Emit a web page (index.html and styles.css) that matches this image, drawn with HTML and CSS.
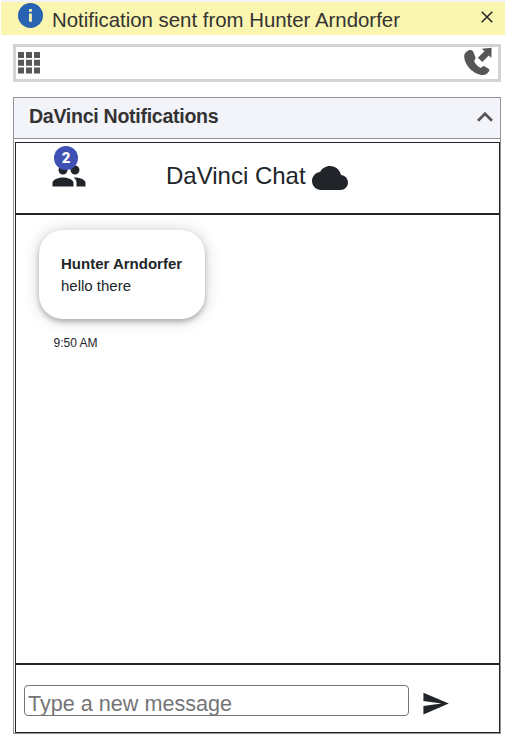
FILE: index.html
```html
<!DOCTYPE html>
<html lang="en">
<head>
<meta charset="utf-8">
<title>DaVinci Chat</title>
<link rel="stylesheet" href="styles.css">
</head>
<body>
<div class="banner">
  <svg class="info" viewBox="0 0 24 24"><circle cx="12" cy="12" r="12" fill="#2763b1"/><path fill="#faf6b0" d="M10.6 5.8h2.7v2.5h-2.7zM10.6 10h2.7v8h-2.700z"/></svg>
  <span class="banner-text">Notification sent from Hunter Arndorfer</span>
  <svg class="close" viewBox="0 0 12 12"><path d="M.7.7l10.6 10.6M11.3.7L.7 11.3" fill="none" stroke="#222" stroke-width="1.5"/></svg>
</div>
<div class="toolbar">
  <svg class="grid-icon" viewBox="0 0 22 22"><path fill="#555658" d="M0 0h6v6H0zM8 0h6v6H8zM16 0h6v6h-6zM0 7.8h6v6H0zM8 7.8h6v6H8zM16 7.8h6v6h-6zM0 15.5h6v6H0zM8 15.5h6v6H8zM16 15.5h6v6h-6z"/></svg>
  <svg class="phone" viewBox="0 0 28 28"><path fill="#555658" d="M4.500 3.400C2 4.500.2 6.400.2 9c0 9 9.500 19 19 19 2.500 0 4.800-1.700 6-4 .4-.9.200-1.600-.6-2.200l-3.800-2.400c-.8-.5-1.500-.4-2.200.2l-1.900 1.500c-2.900-1.600-5.200-4.100-6.700-7.200l1.100-1.600c.5-.7.600-1.400.2-2.200L9.200 4.600c-.7-1.600-2.700-2.100-4.700-1.200z"/><path fill="#555658" d="M17.800 1.700L27.600.7l-.2 10.200-2.700-2.500-6.300 6.500-4.500-4.200 6.600-6.400z"/></svg>
</div>
<section class="panel">
  <header class="panel-header">
    <h2>DaVinci Notifications</h2>
    <svg class="chevron" viewBox="0 0 16 10"><path d="M1 8.700l7-7 7 7" fill="none" stroke="#555658" stroke-width="2.700"/></svg>
  </header>
  <div class="chat">
    <div class="chat-header">
      <div class="people">
        <svg viewBox="0 0 24 24"><path fill="#212529" d="M16 11c1.660 0 2.990-1.340 2.990-3S17.660 5 16 5s-3 1.340-3 3 1.340 3 3 3zm-8 0c1.660 0 2.990-1.340 2.990-3S9.660 5 8 5 5 6.340 5 8s1.340 3 3 3zm0 2c-2.330 0-7 1.170-7 3.500V19h14v-2.500c0-2.330-4.670-3.500-7-3.500zm8 0c-.29 0-.62.020-.97.050 1.160.84 1.970 1.970 1.970 3.450V19h6v-2.500c0-2.330-4.670-3.500-7-3.500z"/></svg>
        <span class="badge">2</span>
      </div>
      <span class="chat-title">DaVinci Chat</span>
      <svg class="cloud" viewBox="0 0 24 24"><path fill="#212529" d="M19.350 10.040C18.670 6.590 15.640 4 12 4 9.110 4 6.600 5.640 5.350 8.040 2.340 8.360 0 10.910 0 14c0 3.310 2.690 6 6 6h13c2.760 0 5-2.240 5-5 0-2.640-2.050-4.780-4.650-4.960z"/></svg>
    </div>
    <div class="messages">
      <div class="bubble">
        <strong>Hunter Arndorfer</strong>
        <span>hello there</span>
      </div>
      <div class="time">9:50 AM</div>
    </div>
    <div class="composer">
      <input type="text" placeholder="Type a new message">
      <svg class="send" viewBox="0 0 24 24"><path fill="#212529" d="M2.010 21L23 12 2.010 3 2 10l15 2-15 2z"/></svg>
    </div>
  </div>
</section>
</body>
</html>
```
FILE: styles.css
```css
* { box-sizing: border-box; }
body {
  margin: 0;
  height: 739px;
  overflow: hidden;
  background: #fff;
  color: #212529;
  font-family: "Liberation Sans", Arial, sans-serif;
}
svg { display: block; flex: none; }
.banner {
  display: flex;
  align-items: flex-start;
  height: 35px;
  padding: 2px 12px 0 17px;
  border-left: 1px solid #fff;
  background: linear-gradient(#f3f4fa 2px, #faf6b0 2px);
}
.info { width: 25px; height: 25px; margin-top: 1px; }
.banner-text { margin: 6px auto 0 9px; font-size: 20.4px; line-height: 24px; white-space: nowrap; color: #333; }
.close { width: 12px; height: 12px; margin-top: 9px; }
.toolbar {
  display: flex;
  justify-content: space-between;
  width: 488px;
  height: 38px;
  margin: 9px 0 0 13px;
  padding: 0 6px 0 2px;
  border: 3px solid #d3d3d3;
}
.grid-icon { width: 22px; height: 22px; margin-top: 5px; }
.phone { width: 28px; height: 28px; }
.panel {
  width: 488px;
  height: 637px;
  margin: 15px 0 0 13px;
  border: 1px solid #929297;
}
.panel-header {
  display: flex;
  justify-content: space-between;
  height: 41px;
  padding: 0 7px 0 15px;
  border-bottom: 1px solid #929297;
  background: #f3f4fa;
}
h2 { margin: 7px 0 0; font-size: 19.6px; letter-spacing: -.3px; line-height: 22px; color: #333; }
.chevron { width: 16px; height: 10px; margin-top: 14px; }
.chat {
  display: flex;
  flex-direction: column;
  height: 591px;
  margin: 3px 0 0 1px;
  border: 1px solid #212529;
}
.chat-header {
  display: flex;
  height: 72px;
  border-bottom: 2px solid #212529;
}
.people { position: relative; width: 36px; margin: 15px 0 0 34.5px; }
.people svg { width: 36px; height: 36px; }
.badge {
  position: absolute;
  left: 3.5px;
  top: -12px;
  width: 24px;
  height: 24px;
  border-radius: 50%;
  background: #3f51b5;
  color: #fff;
  font: 900 15px/25px Roboto, sans-serif;
  text-align: center;
}
.chat-title { margin: 19px 0 0 79.5px; font-size: 24px; line-height: 28px; white-space: nowrap; }
.cloud { width: 36px; height: 36px; margin: 17px 0 0 6.5px; }
.messages { flex: 1; padding: 15px 0 0 23px; }
.bubble {
  display: flex;
  flex-direction: column;
  width: 166px;
  height: 89px;
  padding: 23px 0 0 22px;
  border-radius: 24px;
  box-shadow: 0 3px 5px rgba(0,0,0,.22), 0 1px 16px rgba(0,0,0,.2);
  font-size: 15px;
  line-height: 22px;
  white-space: nowrap;
}
.time { margin: 15px 0 0 14.5px; font-size: 12px; line-height: 18px; }
.composer {
  display: flex;
  height: 69px;
  padding: 20px 0 0 8px;
  border-top: 2px solid #212529;
}
input {
  width: 385px;
  height: 31px;
  padding: 7px 3px 0;
  border: 1px solid #767676;
  border-radius: 4px;
  font: 21.6px "Liberation Sans", Arial, sans-serif;
  background: #fff;
}
input::placeholder { color: #757575; }
.send { width: 29px; height: 29px; margin: 4px 0 0 11.5px; }
```
